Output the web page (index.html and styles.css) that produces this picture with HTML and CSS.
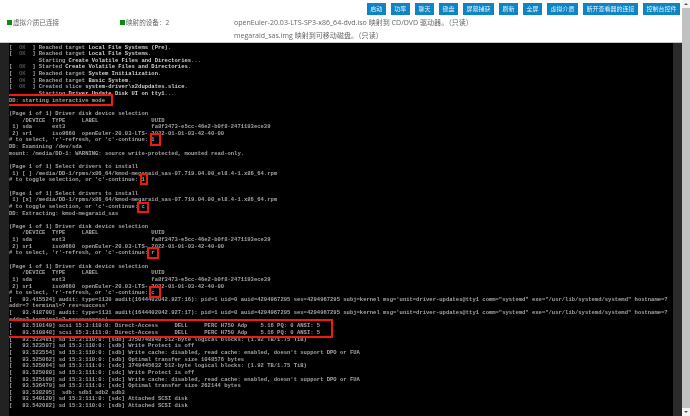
FILE: index.html
```html
<!DOCTYPE html>
<html lang="zh">
<head>
<meta charset="utf-8">
<title>虚拟控制台</title>
<link rel="stylesheet" href="styles.css">
</head>
<body>
<div class="window">
  <div class="main">
    <header class="top">
      <nav class="buttons">
        <button class="btn">启动</button>
        <button class="btn">功率</button>
        <button class="btn">聊天</button>
        <button class="btn">键盘</button>
        <button class="btn">屏幕捕获</button>
        <button class="btn">刷新</button>
        <button class="btn">全屏</button>
        <button class="btn">虚拟介质</button>
        <button class="btn">断开查看器的连接</button>
        <button class="btn">控制台控件</button>
      </nav>
      <div class="status">
        <div class="stat"><i class="dot"></i>虚拟介质已连接</div>
        <div class="stat"><i class="dot"></i>映射的设备：2</div>
        <div class="maps">
          <div>openEuler-20.03-LTS-SP3-x86_64-dvd.iso 映射到 CD/DVD 驱动器。（只读）</div>
          <div>megaraid_sas.img 映射到可移动磁盘。（只读）</div>
        </div>
      </div>
    </header>
    <section class="console">
<pre class="term">[  <i>OK</i>  ] Reached target <b>Local File Systems (Pre)</b>.
[  <i>OK</i>  ] Reached target <b>Local File Systems</b>.
         Starting <b>Create Volatile Files and Directories</b>...
[  <i>OK</i>  ] Started <b>Create Volatile Files and Directories</b>.
[  <i>OK</i>  ] Reached target <b>System Initialization</b>.
[  <i>OK</i>  ] Reached target <b>Basic System</b>.
[  <i>OK</i>  ] Created slice <b>system-driver\x2dupdates.slice</b>.
         Starting <b>Driver Update Disk UI on tty1</b>...
DD: starting interactive mode

(Page 1 of 1) Driver disk device selection
    /DEVICE  TYPE     LABEL                UUID
 1) sda      ext3                          fa8f3473-e5cc-46e2-b0f8-2471193ece39
 2) sr1      iso9660  openEuler-20.03-LTS- 2022-01-01-03-42-40-00
# to select, 'r'-refresh, or 'c'-continue: 1
DD: Examining /dev/sda
mount: /media/DD-1: WARNING: source write-protected, mounted read-only.

(Page 1 of 1) Select drivers to install
 1) [ ] /media/DD-1/rpms/x86_64/kmod-megaraid_sas-07.719.04.00_el8.4-1.x86_64.rpm
# to toggle selection, or 'c'-continue: 1

(Page 1 of 1) Select drivers to install
 1) [x] /media/DD-1/rpms/x86_64/kmod-megaraid_sas-07.719.04.00_el8.4-1.x86_64.rpm
# to toggle selection, or 'c'-continue: c
DD: Extracting: kmod-megaraid_sas

(Page 1 of 1) Driver disk device selection
    /DEVICE  TYPE     LABEL                UUID
 1) sda      ext3                          fa8f3473-e5cc-46e2-b0f8-2471193ece39
 2) sr1      iso9660  openEuler-20.03-LTS- 2022-01-01-03-42-40-00
# to select, 'r'-refresh, or 'c'-continue: r

(Page 1 of 1) Driver disk device selection
    /DEVICE  TYPE     LABEL                UUID
 1) sda      ext3                          fa8f3473-e5cc-46e2-b0f8-2471193ece39
 2) sr1      iso9660  openEuler-20.03-LTS- 2022-01-01-03-42-40-00
# to select, 'r'-refresh, or 'c'-continue: c
[   93.415524] audit: type=1130 audit(1644402042.927:16): pid=1 uid=0 auid=4294967295 ses=4294967295 subj=kernel msg='unit=driver-updates@tty1 comm="systemd" exe="/usr/lib/systemd/systemd" hostname=?
addr=? terminal=? res=success'
[   93.418700] audit: type=1131 audit(1644402042.927:17): pid=1 uid=0 auid=4294967295 ses=4294967295 subj=kernel msg='unit=driver-updates@tty1 comm="systemd" exe="/usr/lib/systemd/systemd" hostname=?
addr=? terminal=? res=success'
[   93.510149] scsi 15:3:110:0: Direct-Access     DELL     PERC H750 Adp    5.16 PQ: 0 ANSI: 5
[   93.510848] scsi 15:3:111:0: Direct-Access     DELL     PERC H750 Adp    5.16 PQ: 0 ANSI: 5
[   93.523481] sd 15:3:110:0: [sdb] 3750748848 512-byte logical blocks: (1.92 TB/1.75 TiB)
[   93.523507] sd 15:3:110:0: [sdb] Write Protect is off
[   93.523554] sd 15:3:110:0: [sdb] Write cache: disabled, read cache: enabled, doesn't support DPO or FUA
[   93.525062] sd 15:3:110:0: [sdb] Optimal transfer size 1048576 bytes
[   93.525064] sd 15:3:111:0: [sdc] 3749445632 512-byte logical blocks: (1.92 TB/1.75 TiB)
[   93.525080] sd 15:3:111:0: [sdc] Write Protect is off
[   93.525109] sd 15:3:111:0: [sdc] Write cache: disabled, read cache: enabled, doesn't support DPO or FUA
[   93.536479] sd 15:3:111:0: [sdc] Optimal transfer size 262144 bytes
[   93.538295]  sdb: sdb1 sdb2 sdb3
[   93.540120] sd 15:3:111:0: [sdc] Attached SCSI disk
[   93.542082] sd 15:3:110:0: [sdb] Attached SCSI disk</pre>
      <span class="mark m1"></span>
      <span class="mark m2"></span>
      <span class="mark m3"></span>
      <span class="mark m4"></span>
      <span class="mark m5"></span>
      <span class="mark m6"></span>
      <span class="mark m7"></span>
    </section>
  </div>
  <aside class="scrollbar">
    <svg class="arrow" viewBox="0 0 8 8" aria-hidden="true"><path d="M2 5h4L4 3z"/></svg>
    <div class="thumb"></div>
    <svg class="arrow" viewBox="0 0 8 8" aria-hidden="true"><path d="M2 3h4L4 5z"/></svg>
  </aside>
</div>
</body>
</html>
```
FILE: styles.css
```css
* { box-sizing: border-box; }
html, body { margin: 0; height: 100%; overflow: hidden; background: #fff; }
.window { display: flex; width: 690px; height: 416px; filter: blur(0.4px); }
.main { width: 682px; display: flex; flex-direction: column; }
.top { height: 43px; border-bottom: 1px solid #c8c8c8; background: #fff; display: flex; flex-direction: column; }
.buttons { display: flex; justify-content: flex-end; gap: 5px; padding: 3px 2px 0 0; height: 16px; }
.btn { height: 12px; padding: 0 3.5px; border: 0; border-radius: 0; background: #0d85c5; color: #e6f2f9; font: 6px/12px "Noto Sans CJK SC", sans-serif; white-space: nowrap; }
.status { display: flex; color: #666; font: 6.6px/13px "Open Sans", "Noto Sans CJK SC", sans-serif; padding: 0 0 0 7px; }
.stat { display: flex; align-items: center; height: 13px; }
.stat:nth-child(1) { width: 113px; }
.stat:nth-child(2) { width: 114px; }
.maps { font-size: 7.05px; }
.dot { width: 5px; height: 5px; margin-right: 1px; background: #0a8a12; }
.console { position: relative; flex: 1; min-height: 0; background: #000; border-left: 9px solid #222; border-right: 9px solid #2a2a2a; overflow: hidden; }
.term { margin: 1.5px 0 0; padding: 0; color: #a4a4a4; font: bold 5.53px/6.645px "Liberation Mono", monospace; white-space: pre; }
.term i { font-style: normal; color: #4d4d4d; }
.term b { color: #d0d0d0; }
.mark { position: absolute; border: 2px solid #f01a10; }
.m1 { left: -2px; top: 51px; width: 106px; height: 12px; }
.m2 { left: 141px; top: 90px; width: 11px; height: 13px; }
.m3 { left: 131px; top: 130px; width: 8px; height: 12px; }
.m4 { left: 128px; top: 159px; width: 12px; height: 11px; }
.m5 { left: 138px; top: 204px; width: 12px; height: 12px; }
.m6 { left: 140px; top: 243px; width: 12px; height: 12px; }
.m7 { left: -2px; top: 276px; width: 326px; height: 19px; }
.scrollbar { width: 8px; background: #f4f4f4; display: flex; flex-direction: column; }
.arrow { width: 8px; height: 8px; fill: #555; flex: none; }
.thumb { flex: 1; background: #c1c1c1; }
```
